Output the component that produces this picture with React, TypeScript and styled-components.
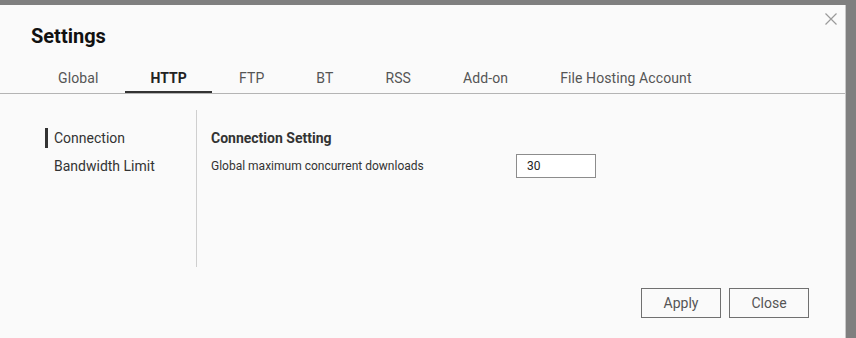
import React from "react";
import styled, { createGlobalStyle } from "styled-components";

const GlobalStyle = createGlobalStyle`
  html, body {
    margin: 0;
    padding: 0;
    background: #7f7f7f;
    font-family: Roboto, "Liberation Sans", Arial, sans-serif;
    overflow: hidden;
  }
`;

const Page = styled.div`
  height: 338px;
  padding-top: 5px;
  box-sizing: border-box;
`;

const Dialog = styled.div`
  position: relative;
  width: 845px;
  height: 333px;
  background: #fafafa;
  border-right: 1px solid #c8c8c8;
  display: flex;
  flex-direction: column;
`;

const Title = styled.h1`
  margin: 19px 0 0 31px;
  font-size: 20px;
  line-height: 24px;
  font-weight: 700;
  color: #111111;
`;

const CloseButton = styled.button`
  position: absolute;
  top: 8px;
  right: 8px;
  width: 12px;
  height: 12px;
  padding: 0;
  border: none;
  background: none;
  display: flex;
`;

const TabBar = styled.div`
  display: flex;
  gap: 2px;
  margin-top: 15px;
  padding-left: 33px;
  border-bottom: 1px solid #b4b4b4;
`;

const Tab = styled.div<{ $active?: boolean }>`
  height: 26px;
  padding: 2px 25px 0;
  font-size: 14px;
  line-height: 26px;
  letter-spacing: 0.1px;
  color: ${(p) => (p.$active ? "#222222" : "#555555")};
  font-weight: ${(p) => (p.$active ? 700 : 400)};
  border-bottom: 2px solid ${(p) => (p.$active ? "#333333" : "transparent")};
`;

const Body = styled.div`
  display: flex;
  padding-top: 16px;
`;

const Nav = styled.div`
  width: 151px;
  height: 139px;
  padding: 18px 0 0 45px;
  border-right: 1px solid #cfcfcf;
  display: flex;
  flex-direction: column;
  gap: 8px;
`;

const NavItem = styled.div<{ $active?: boolean }>`
  height: 20px;
  line-height: 20px;
  padding-left: 6px;
  font-size: 14px;
  color: #333333;
  border-left: 3px solid ${(p) => (p.$active ? "#333333" : "transparent")};
`;

const Content = styled.div`
  padding: 18px 0 0 14px;
  display: flex;
  flex-direction: column;
  gap: 6px;
`;

const SectionTitle = styled.div`
  font-size: 14px;
  line-height: 20px;
  font-weight: 700;
  color: #333333;
`;

const FieldRow = styled.div`
  display: flex;
  align-items: center;
  height: 24px;
`;

const Label = styled.label`
  width: 305px;
  font-size: 12px;
  color: #333333;
`;

const Input = styled.input`
  width: 80px;
  height: 24px;
  box-sizing: border-box;
  border: 1px solid #8c8c8c;
  background: #ffffff;
  padding: 0 10px;
  font-family: inherit;
  font-size: 12px;
  color: #222222;
  outline: none;
`;

const Footer = styled.div`
  display: flex;
  justify-content: flex-end;
  gap: 8px;
  margin-top: 21px;
  padding-right: 36px;
`;

const Button = styled.button`
  width: 80px;
  height: 30px;
  border: 1px solid #707070;
  background: #fafafa;
  font-family: inherit;
  font-size: 14px;
  color: #555555;
  padding: 0;
`;

const tabs = ["Global", "HTTP", "FTP", "BT", "RSS", "Add-on", "File Hosting Account"];

export default function App() {
  return (
    <Page>
      <GlobalStyle />
      <Dialog>
        <Title>Settings</Title>
        <CloseButton aria-label="Close">
          <svg width="12" height="12" viewBox="0 0 12 12">
            <path d="M0.5 0.5 L11.5 11.5 M11.5 0.5 L0.5 11.5" stroke="#9a9a9a" strokeWidth="1.2" fill="none" />
          </svg>
        </CloseButton>
        <TabBar>
          {tabs.map((t) => (
            <Tab key={t} $active={t === "HTTP"}>
              {t}
            </Tab>
          ))}
        </TabBar>
        <Body>
          <Nav>
            <NavItem $active>Connection</NavItem>
            <NavItem>Bandwidth Limit</NavItem>
          </Nav>
          <Content>
            <SectionTitle>Connection Setting</SectionTitle>
            <FieldRow>
              <Label>Global maximum concurrent downloads</Label>
              <Input defaultValue="30" />
            </FieldRow>
          </Content>
        </Body>
        <Footer>
          <Button>Apply</Button>
          <Button>Close</Button>
        </Footer>
      </Dialog>
    </Page>
  );
}
